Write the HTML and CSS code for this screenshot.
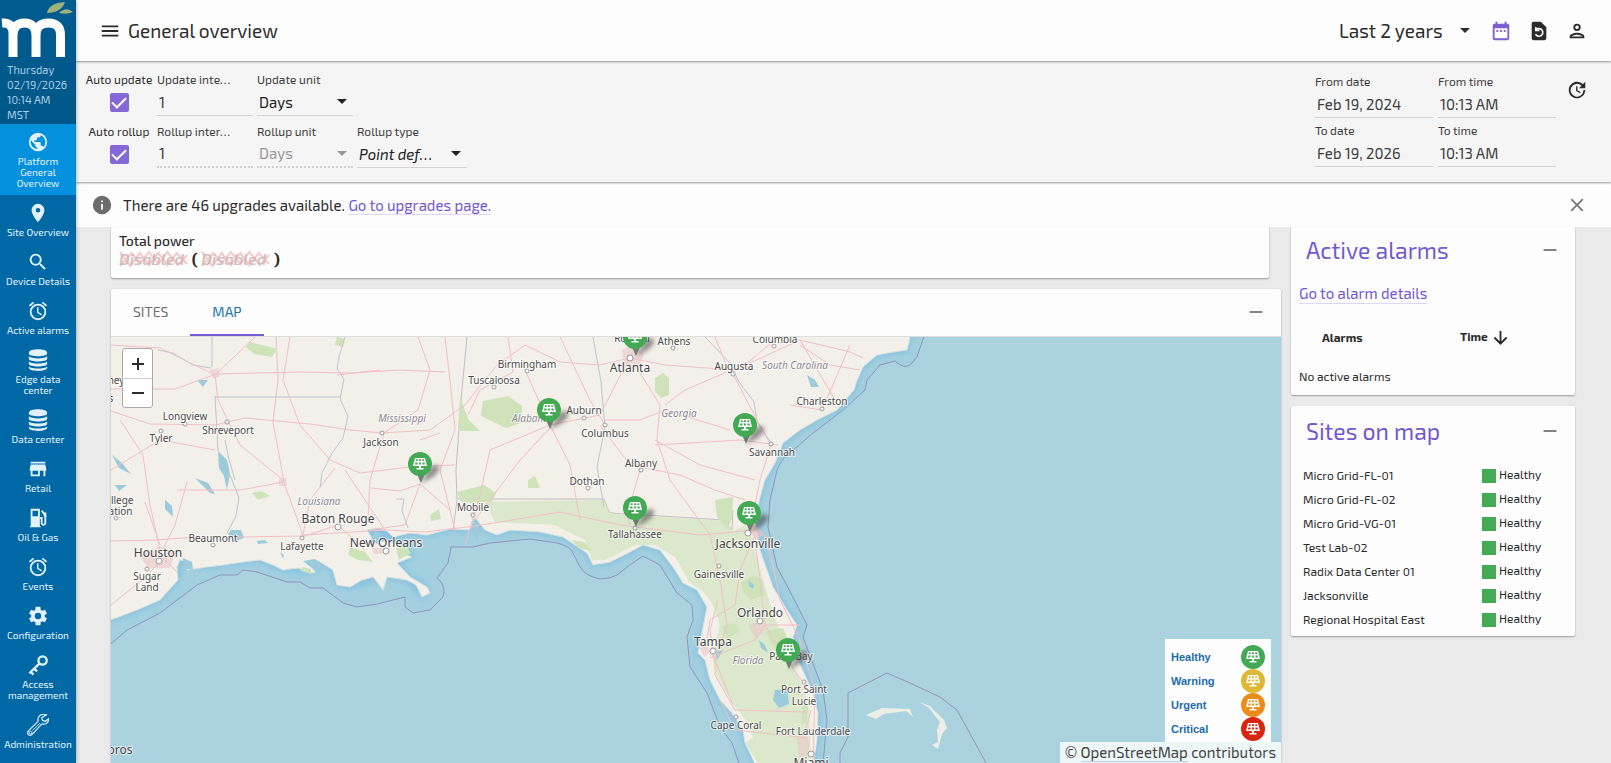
FILE: index.html
```html
<!DOCTYPE html>
<html lang="en">
<head>
<meta charset="utf-8">
<meta name="viewport" content="width=device-width, initial-scale=1">
<title>General overview</title>
<link rel="stylesheet" href="styles.css">
</head>
<body>
<svg class="defs" aria-hidden="true">
  <symbol id="alarm" viewBox="0 0 24 24"><path d="M12 4a9 9 0 1 0 0 18 9 9 0 0 0 0-18zm0 16a7 7 0 1 1 0-14 7 7 0 0 1 0 14zm.5-12H11v6l4.700 2.900.8-1.300-4-2.400zM22 5.700l-4.600-3.900-1.300 1.500 4.600 3.900zM7.900 3.300 6.600 1.800 2 5.700l1.300 1.500z"/></symbol>
  <symbol id="db" viewBox="0 0 24 24"><path d="M2 4c0-5 20-5 20 0v1c0 4-20 4-20 0zM2 8c3 3 17 3 20 0v2.500c0 4-20 4-20 0zM2 13.500c3 3 17 3 20 0V16c0 4-20 4-20 0zM2 19c3 3 17 3 20 0v1.500c0 4.500-20 4.500-20 0z"/></symbol>
  <symbol id="down" viewBox="0 0 10 5"><path d="M0 0h10L5 5z"/></symbol>
  <symbol id="scribble" viewBox="0 0 67 18" preserveAspectRatio="none"><path fill="none" stroke="currentColor" stroke-width="2" d="M1 2 11 16 20 3 29 15 38 3 47 15 56 3 66 14M1 16 12 3 20 13 29 2 38 14 47 2 57 15 66 5"/></symbol>
  <symbol id="panel" viewBox="0 0 14 12"><path fill-rule="evenodd" d="M2 0h10l2 8H8v2h2.500v1.500h-7V10H6V8H0zM3 1.300l-.3 1.700h2V1.300zm3 0V3h2V1.300zm3.300 0V3h2L11 1.300zM2.300 4.500 2 6.500h2.600v-2zm3.700 0v2h2v-2zm3.400 0v2H12l-.4-2z"/></symbol>
  <symbol id="pin" viewBox="0 0 36 34" overflow="visible"><path d="M13 31 22 15Q32 10 31 18 28 25 13 31z" fill="#333" opacity=".5" filter="url(#soft)"/><path d="M9 22l4 9 4-9z" fill="#6c8070"/><circle cx="12" cy="12" r="12" fill="#43a954"/><use href="#panel" x="5" y="6" width="14" height="12" fill="#fff"/></symbol>
  <filter id="soft" x="-30%" y="-30%" width="160%" height="160%"><feGaussianBlur stdDeviation="2"/></filter>
  <filter id="haze"><feGaussianBlur stdDeviation="3"/></filter>
</svg>

<div class="app">
  <nav class="sidebar" aria-label="Main">
    <div class="brand">
      <svg class="logo" viewBox="0 0 76 60" role="img" aria-label="Logo">
        <path fill="#9fb27c" d="M47 13Q49 3 65 2 61 13 47 13zM59 13Q66 6 73 12 67 15 59 13z"/>
        <path fill="none" stroke="#fff" stroke-width="9" d="M2 23Q13 22 13 34V57M13 36Q13 23 24.500 23T36 36V57M36 36Q36 23 48.500 23T60.500 36V57"/>
      </svg>
      <p class="clock">Thursday<br>02/19/2026<br>10:14 AM<br>MST</p>
    </div>
    <a class="item active" href="#"><svg viewBox="0 0 24 24"><path d="M12 2a10 10 0 1 0 0 20 10 10 0 0 0 0-20zm-1 17.900A8 8 0 0 1 4.200 10.200L9 15v1c0 1.100.9 2 2 2zm6.900-2.500A2 2 0 0 0 16 16h-1v-3c0-.6-.4-1-1-1H8v-2h2c.6 0 1-.4 1-1V7h2c1.100 0 2-.9 2-2v-.4a8 8 0 0 1 2.900 12.800z"/></svg>Platform General Overview</a>
    <a class="item" href="#"><svg viewBox="0 0 24 24"><path d="M12 2a7 7 0 0 0-7 7c0 5.200 7 13 7 13s7-7.800 7-13a7 7 0 0 0-7-7zm0 9.500a2.500 2.500 0 1 1 0-5 2.500 2.500 0 0 1 0 5z"/></svg>Site Overview</a>
    <a class="item" href="#"><svg viewBox="0 0 24 24"><path d="M15.500 14h-.8l-.3-.3a6.500 6.500 0 1 0-.7.7l.3.3v.8l5 5 1.500-1.500zm-6 0a4.500 4.500 0 1 1 0-9 4.500 4.500 0 0 1 0 9z"/></svg>Device Details</a>
    <a class="item" href="#"><svg><use href="#alarm"/></svg>Active alarms</a>
    <a class="item" href="#"><svg><use href="#db"/></svg>Edge data center</a>
    <a class="item" href="#"><svg><use href="#db"/></svg>Data center</a>
    <a class="item" href="#"><svg viewBox="0 0 24 24"><path d="M20 4H4v2h16zm1 10v-2l-1-5H4l-1 5v2h1v6h10v-6h4v6h2v-6zm-9 4H6v-4h6z"/></svg>Retail</a>
    <a class="item" href="#"><svg viewBox="0 0 24 24"><path fill-rule="evenodd" d="M4 2h10v19h1v1H3v-1h1zm2 2v6h6V4z"/><path fill="none" stroke="currentColor" stroke-width="2" d="M14 12h2v6q2 3 4 0V9l-4-5"/><path d="M17 6h4v5h-2z"/></svg>Oil &amp; Gas</a>
    <a class="item" href="#"><svg><use href="#alarm"/></svg>Events</a>
    <a class="item" href="#"><svg viewBox="0 0 24 24"><path d="M19.400 13a7.500 7.500 0 0 0 0-2l2.400-1.800-2.300-4-2.800 1.200a7 7 0 0 0-1.700-1L14.600 2H9.400L9 5.400a7 7 0 0 0-1.700 1L4.500 5.200l-2.300 4L4.600 11a7.500 7.500 0 0 0 0 2l-2.400 1.800 2.300 4 2.800-1.200a7 7 0 0 0 1.700 1l.4 3.400h5.200l.4-3.400a7 7 0 0 0 1.700-1l2.800 1.200 2.300-4zM12 15.500a3.500 3.500 0 1 1 0-7 3.500 3.500 0 0 1 0 7z"/></svg>Configuration</a>
    <a class="item" href="#"><svg viewBox="0 0 24 24" fill="none"><g fill="none" stroke="currentColor" stroke-width="2.500"><circle cx="17" cy="7" r="4.500"/><path d="M13.500 10.500 2.500 21M4 19.500l3 3M8 16l3 3"/></g></svg>Access management</a>
    <a class="item" href="#"><svg viewBox="0 0 24 24"><path fill="none" stroke="currentColor" stroke-width="1.300" d="M21 1q-7-2-9 4v3L1 19q-1 3 1 4t4-1L16 11q7 1 8-6l-4 3-3-1-1-3z"/><path fill="none" stroke="currentColor" d="M14 10 6 18"/><circle cx="4" cy="20.500" r="1.500" fill="none" stroke="currentColor"/></svg>Administration</a>
  </nav>

  <div class="page">
    <header class="header">
      <button class="icon" aria-label="Menu"><svg viewBox="0 0 24 24"><path d="M3 6h18v2H3zm0 5h18v2H3zm0 5h18v2H3z"/></svg></button>
      <h1>General overview</h1>
      <div class="range"><select aria-label="Time range"><option>Last 2 years</option></select><svg class="arrow"><use href="#down"/></svg></div>
      <div class="actions">
        <button class="icon violet" aria-label="Date range"><svg viewBox="0 0 24 24"><path d="M7 11h2v2H7zm4 0h2v2h-2zm4 0h2v2h-2zM19 4h-1V2h-2v2H8V2H6v2H5a2 2 0 0 0-2 2v14c0 1.100.9 2 2 2h14a2 2 0 0 0 2-2V6a2 2 0 0 0-2-2zm0 16H5V9h14z"/></svg></button>
        <button class="icon" aria-label="Restore"><svg viewBox="0 0 24 24"><path d="M14 2H6a2 2 0 0 0-2 2v16c0 1.100.9 2 2 2h12a2 2 0 0 0 2-2V8z"/><path fill="none" stroke="#fdfdfd" stroke-width="1.800" d="M9 10.500a4.200 4.200 0 1 1-.8 5M8.500 7.500v4h4"/></svg></button>
        <button class="icon" aria-label="User"><svg viewBox="0 0 24 24"><path d="M12 6a2 2 0 1 1 0 4 2 2 0 0 1 0-4m0 10c2.700 0 5.800 1.300 6 2H6c.2-.7 3.300-2 6-2m0-12a4 4 0 1 0 0 8 4 4 0 0 0 0-8zm0 10c-2.700 0-8 1.300-8 4v2h16v-2c0-2.700-5.300-4-8-4z"/></svg></button>
      </div>
    </header>

    <section class="toolbar" aria-label="Date settings">
      <div class="update">
        <label class="check">Auto update<input type="checkbox" checked></label>
        <label class="field">Update inte…<input value="1"></label>
        <label class="field">Update unit<span class="pick"><select><option>Days</option></select><svg class="arrow"><use href="#down"/></svg></span></label>
        <span></span>
        <label class="check">Auto rollup<input type="checkbox" checked></label>
        <label class="field dotted">Rollup inter…<input value="1"></label>
        <label class="field dotted off">Rollup unit<span class="pick"><select disabled><option>Days</option></select><svg class="arrow"><use href="#down"/></svg></span></label>
        <label class="field">Rollup type<span class="pick"><select class="italic"><option>Point def…</option></select><svg class="arrow"><use href="#down"/></svg></span></label>
      </div>
      <div class="dates">
        <label class="field">From date<input value="Feb 19, 2024"></label>
        <label class="field">From time<input value="10:13 AM"></label>
        <label class="field">To date<input value="Feb 19, 2026"></label>
        <label class="field">To time<input value="10:13 AM"></label>
      </div>
      <button class="icon reload" aria-label="Refresh"><svg viewBox="0 0 24 24"><path d="M21 10.100h-6.800l2.700-2.800a7 7 0 1 0 2.100 4.800h2A9 9 0 1 1 18.400 5.700L21 3zM12.500 8v4.300l3.500 2-.7 1.200L11 13V8z"/></svg></button>
    </section>

    <div class="notice">
      <svg class="info" viewBox="0 0 24 24"><path d="M12 2a10 10 0 1 0 0 20 10 10 0 0 0 0-20zm1 15h-2v-6h2zm0-8h-2V7h2z"/></svg>
      <p>There are 46 upgrades available. <a href="#">Go to upgrades page.</a></p>
      <button class="icon grey" aria-label="Dismiss"><svg viewBox="0 0 24 24"><path d="M19 6.400 17.600 5 12 10.600 6.400 5 5 6.400l5.600 5.600L5 17.600 6.400 19l5.600-5.600 5.600 5.600 1.400-1.400-5.600-5.600z"/></svg></button>
    </div>

    <main class="content">
      <div class="left">
        <section class="card power">
          <h2>Total power</h2>
          <p><span class="disabled">Disabled<svg><use href="#scribble"/></svg></span> <b>(</b> <span class="disabled">Disabled<svg><use href="#scribble"/></svg></span> <b>)</b></p>
        </section>
        <section class="card map-card">
          <div class="tabs" role="tablist">
            <button role="tab">SITES</button>
            <button role="tab" class="selected" aria-selected="true">MAP</button>
            <button class="icon grey" aria-label="Collapse"><svg viewBox="0 0 24 24"><path d="M5 11h14v2H5z"/></svg></button>
          </div>
          <div class="map">
            <svg class="chart" viewBox="111 337 1170 426" preserveAspectRatio="xMinYMin slice" role="img" aria-label="Site map">
              <rect x="111" y="337" width="1170" height="426" fill="#aad3df"/>
              <path class="shelf" d="M100 650 112 643 127 630 160 613 197 585 220 575 237 575 243 570 257 572 287 582 300 582 310 588 323 588 343 603 357 607 377 604 405 597 405 607 413 613 430 610 443 597Q447 586 437 578L448 563 451 547 473 547 490 543 530 539 557 543Q570 546 573 553L580 567Q585 576 600 579 610 579 617 575L630 565 643 556 660 565 677 593 692 605 693 620 687 637 690 667 707 693 720 727 732 743 743 775H822L827 720 823 690 803 637 807 625 793 597 777 567 768 527 770 500 777 470Q782 456 797 447L813 433 843 410 865 390 867 380 880 365 895 361Q905 370 911 364L917 357 926 330H100z"/>
              <path class="shallows" filter="url(#haze)" d="M100 330H911L909 342 907 350 893 352 877 355 863 367 856 383 854 390 837 410 817 420 800 430 783 443 775 463 765 480 760 497 755 520 760 550 773 587 787 610 797 625 793 637 798 660 813 693 818 713 817 740 812 770H758L745 743 743 730 732 713 720 700 710 680 705 660 698 653 703 627 707 607 697 590 683 583 673 567 660 550 643 545 630 552 610 562 593 565 587 553 563 537 540 532 510 530 497 535 485 530 477 520 470 530 450 529 427 535 410 533 393 537 403 547 412 557 397 563 410 577 427 587 422 597 407 580 387 577 350 587 337 585 333 570 317 560 310 573 283 570 260 560 243 562 223 565 207 567 180 560 178 580 160 600 137 610 100 624z"/>
              <path class="land" d="M100 330H911L909 342 907 350 893 352 877 355 863 367 856 383 854 390 837 410 817 420 800 430 783 443 775 463 765 480 760 497 755 520 760 550 773 587 787 610 797 625 793 637 798 660 813 693 818 713 817 740 812 770H758L745 743 743 730 732 713 720 700 710 680 705 660 698 653 703 627 707 607 697 590 683 583 673 567 660 550 643 545 630 552 610 562 593 565 587 553 563 537 540 532 510 530 497 535 485 530 477 520 474 518 470 530 450 529 427 535 410 533 393 537 387 531 377 528 367 530 373 540 393 543 403 547 400 552 412 557 397 563 410 577 427 587 430 593 422 597 416 585 407 580 387 577 383 590 378 583 373 577 362 580 350 587 337 585 333 570 317 560 316 572 310 573 298 568 283 570 273 565 260 560 243 562 223 565 207 567 187 570 191 562 180 560 177 567 178 580 160 600 137 610 100 624z"/>
              <path class="state" d="M451 545 457 500 456 470 461 400 467 337M457 499H604L609 512Q614 514 630 514L724 520 732 530 733 510"/>
              <g class="green">
                <path d="M250 342l12 3 15 4-5 8-18-3-8-7zM337 337l8 2-2 8-8-2zM460 396l8 23 12 12H458zM483 401l25-5 14 10-1 17-15 5-25-12zM457 492l27-7 12 8-4 9-22 1-10-2zM528 480l7-4 5 12-12 0zM655 378l8-5 6 5 0 17-8 3-6-7zM715 500l18-3-1 22-5 10-10-12zM430 515l9-6 2 10-10 2zM252 493l10-2 8 5-12 4z"/>
                <path opacity=".65" d="M485 502 604 500 612 514 725 521 733 531 745 525 751 535 756 555 766 590 777 625 785 640 793 665 804 690 809 710 811 763H758L745 743 753 738 747 722 731 701 716 675 712 655 720 625 713 605 704 592 690 583 675 557 655 545 635 545 605 560 592 560 585 540 555 525 495 522z"/>
                <path d="M741 582l13-7 8 5 3 15-14 5-8-8zM722 626l12-3 6 8-13 8zM765 631l18-3 6 14-14 8zM803 705l5 0-1 17-6 3zM350 547l15 5 8 10-15-2-10-5zM396 548l10-2 5 7-12 7zM302 567l9 2 0 5-10-3zM572 540l12 2 8 9-14-3z"/>
              </g>
              <g class="lake">
                <path d="M218 451l9 9 3 14-3 16-3-14-5-8zM195 478l15 15 5 1-7-11zM165 500l7 6 1 11-8-8zM228 534l3-4 10 0 3 8-10 4zM280 552l4 3-1 4zM303 561l12-2 10 9-8 6-4-5zM375 531l7 3-4 10-8-3zM470 530l5-12 5 14-3 8zM775 690l12-1 2 15-10 4-6-8zM807 375l8 5 4 7-8 0zM748 580l6 5-1 4-4-3zM715 652l8-2-6 10zM759 640l6 5 3 8-7-5zM183 558l9 4 1 8-9-2zM257 541l8-1 3 3-10 1zM112 455l10 8 9 11-12-6zM115 485l12 0-8 6zM197 380l11 0-5 7z"/>
              </g>
              <path class="river" d="M345 337l-6 20-2 12 7 10-4 20 8 17-5 22-11 15-10 20-2 15M218 451l-3-55M230 475l9 23-3 18-9 17M225 440l4 20 6 20M158 350l15 3 20 12 18 3M396 499l8 0-2 12 6 17M705 337l24 25 10 20 15 20 3 20 15 22M593 337l8 45 4 45-8 40 7 40M212 337v30M215 397H340"/>
              <g class="road">
                <path d="M111 411 150 424 215 425 245 418 310 424 350 430 382 433 430 430 465 405 497 365 525 345 560 362 600 365 630 358 665 365 735 370 800 340 850 352 863 358"/>
                <path d="M111 345 160 348 215 375 218 400 228 421 240 445 283 480 303 535 385 530 425 532 475 526 500 522 560 512 620 525 700 535 755 530 767 537 780 600 800 640 815 690 813 763"/>
                <path d="M111 389 175 389 216 374 255 337M215 374 300 372 350 373 400 370 445 372M276 337 278 380 273 422 280 460 284 482 240 490 177 490M111 541 155 540 195 537 240 537 305 536 338 525 365 550"/>
                <path d="M120 420 143 455 150 505 160 550M162 560l-20 20-31 25M160 545l-15-43M160 555l18 18M187 482 175 525 160 555M384 433 418 410 430 370 418 337M384 433 370 480 368 520M420 484 405 525 370 530M420 484 400 491 371 488M420 484 450 510M420 440 440 433"/>
                <path d="M550 428 520 460 490 500 475 520M525 370 550 425 600 415 640 337M605 420 640 420 665 410 730 430M635 365 660 405 657 440 670 480 710 535 720 580 727 625 715 660 715 675 735 710 807 712M665 405 685 390 720 375 745 365 778 337M733 374 765 435 771 445 760 480 750 530"/>
                <path d="M755 535 740 570 735 605 710 620 707 640M755 540 760 580 765 625 755 640 710 658M765 625 800 625M765 625 780 650 805 685M720 700 735 730 808 738M718 600 710 630 713 655 733 705M803 740l8-30"/>
                <path d="M445 337 450 380 455 430 440 470 455 530M508 337 513 372 480 390 468 415M465 545 480 495 490 450 550 425 570 465 580 520M640 470 627 515 630 525M600 425 630 465 680 475 715 490 745 500M655 440 700 465 755 480M778 445 740 440 655 445M560 337 590 400 605 425"/>
                <path d="M290 337 283 380 300 425 330 460 360 473 410 467 455 465M337 375 380 370M335 468 310 500 303 535M345 470 365 500 385 530M111 470 160 440 215 450M800 340 835 400M850 345 822 410 790 405M730 374 715 337M800 345 830 365 860 370"/>
              </g>
              <g class="urban"><path d="M140 556l20-10 15 8-5 14-22 0zM622 350l12-6 10 10-5 12-15 0zM748 528l8-3 8 8-8 9zM748 625l12-5 6 9-10 10zM797 737l8-5 5 12-5 20-6-7zM700 648l7-4 3 8-6 5zM210 370l8-2 2 8-7 3zM279 478l7 0 1 8-8 0zM372 548l12 0 1 5-11 1z"/></g>
              <path class="border" d="M840 770V753L848 737V693L887 673 910 683 940 697 957 710 990 770"/>
              <path class="cay" d="M866 715l16-7 28 1 3 8-7-6-22 3-8 5zM919 702l11 4 14 14 3 8-5 6-4 15-6-4 6-3-1-12 3-8-11-14z"/>
              <g class="dots">
                <circle cx="185" cy="424" r="2"/><circle cx="161" cy="431" r="2"/><circle cx="227" cy="422" r="2"/><circle cx="382" cy="433" r="2"/><circle cx="494" cy="387" r="2"/><circle cx="527" cy="371" r="2"/><circle cx="630" cy="358" r="3"/><circle cx="673" cy="348" r="2"/><circle cx="774" cy="346" r="2"/><circle cx="733" cy="374" r="2"/><circle cx="822" cy="409" r="2"/><circle cx="584" cy="418" r="2"/><circle cx="605" cy="425" r="2"/><circle cx="771" cy="444" r="2"/><circle cx="641" cy="470" r="2"/><circle cx="588" cy="488" r="2"/><circle cx="338" cy="527" r="3"/><circle cx="302" cy="538" r="2"/><circle cx="386" cy="551" r="3"/><circle cx="213" cy="545" r="2"/><circle cx="159" cy="561" r="3"/><circle cx="147" cy="569" r="2"/><circle cx="473" cy="515" r="2"/><circle cx="635" cy="528" r="2"/><circle cx="748" cy="533" r="3"/><circle cx="719" cy="566" r="2"/><circle cx="760" cy="621" r="3"/><circle cx="713" cy="651" r="3"/><circle cx="804" cy="682" r="2"/><circle cx="736" cy="717" r="2"/><circle cx="811" cy="754" r="3"/><circle cx="116" cy="518" r="2"/>
              </g>
              <g class="town">
                <text x="185" y="420">Longview</text><text x="161" y="442">Tyler</text><text x="228" y="434">Shreveport</text><text x="381" y="446">Jackson</text><text x="494" y="384">Tuscaloosa</text><text x="527" y="368">Birmingham</text><text x="632" y="342">Roswell</text><text x="674" y="345">Athens</text><text x="775" y="343">Columbia</text><text x="734" y="370">Augusta</text><text x="822" y="405">Charleston</text><text x="584" y="414">Auburn</text><text x="605" y="437">Columbus</text><text x="772" y="456">Savannah</text><text x="641" y="467">Albany</text><text x="587" y="485">Dothan</text><text x="473" y="511">Mobile</text><text x="635" y="538">Tallahassee</text><text x="719" y="578">Gainesville</text><text x="302" y="550">Lafayette</text><text x="213" y="542">Beaumont</text><text x="147" y="580">Sugar</text><text x="147" y="591">Land</text><text x="791" y="660">Palm Bay</text><text x="804" y="693">Port Saint</text><text x="804" y="705">Lucie</text><text x="736" y="729">Cape Coral</text><text x="813" y="735">Fort Lauderdale</text><text x="116" y="384">ney</text><text x="116" y="504">College</text><text x="116" y="515">Station</text><text x="111" y="402">s</text>
              </g>
              <g class="city">
                <text x="630" y="372">Atlanta</text><text x="338" y="523">Baton Rouge</text><text x="386" y="547">New Orleans</text><text x="158" y="557">Houston</text><text x="748" y="548">Jacksonville</text><text x="760" y="617">Orlando</text><text x="713" y="646">Tampa</text><text x="811" y="767">Miami</text><text x="100" y="754">Matamoros</text>
              </g>
              <g class="region">
                <text x="402" y="422">Mississippi</text><text x="319" y="505">Louisiana</text><text x="532" y="422">Alabama</text><text x="679" y="417">Georgia</text><text x="795" y="369">South Carolina</text><text x="748" y="664">Florida</text>
              </g>
              <use href="#pin" x="623" y="325" width="36" height="34"/>
              <use href="#pin" x="537" y="398" width="36" height="34"/>
              <use href="#pin" x="733" y="413" width="36" height="34"/>
              <use href="#pin" x="408" y="452" width="36" height="34"/>
              <use href="#pin" x="623" y="496" width="36" height="34"/>
              <use href="#pin" x="737" y="501" width="36" height="34"/>
              <use href="#pin" x="776" y="638" width="36" height="34"/>
            </svg>
            <div class="zoom"><button aria-label="Zoom in"><svg viewBox="0 0 12 12"><path d="M0 5h12v2H0zM5 0h2v12H5z"/></svg></button><button aria-label="Zoom out"><svg viewBox="0 0 12 12"><path d="M0 5h12v2H0z"/></svg></button></div>
            <div class="overlay">
              <ul class="legend">
                <li>Healthy<i class="healthy"><svg><use href="#panel"/></svg></i></li>
                <li>Warning<i class="warning"><svg><use href="#panel"/></svg></i></li>
                <li>Urgent<i class="urgent"><svg><use href="#panel"/></svg></i></li>
                <li>Critical<i class="critical"><svg><use href="#panel"/></svg></i></li>
              </ul>
              <p class="credit">© <a href="#">OpenStreetMap</a> contributors</p>
            </div>
          </div>
        </section>
      </div>
      <aside class="right">
        <section class="card alarms">
          <header><h2>Active alarms</h2><button class="icon grey" aria-label="Collapse"><svg viewBox="0 0 24 24"><path d="M5 11h14v2H5z"/></svg></button></header>
          <a href="#">Go to alarm details</a>
          <table>
            <thead><tr><th>Alarms</th><th>Time<svg viewBox="0 0 16 16"><path fill="none" stroke="currentColor" stroke-width="2" d="M8 1v13M1.500 8 8 14.500 14.500 8"/></svg></th></tr></thead>
            <tbody><tr><td colspan="2">No active alarms</td></tr></tbody>
          </table>
        </section>
        <section class="card sites">
          <header><h2>Sites on map</h2><button class="icon grey" aria-label="Collapse"><svg viewBox="0 0 24 24"><path d="M5 11h14v2H5z"/></svg></button></header>
          <table><tbody>
            <tr><td>Micro Grid-FL-01</td><td><i></i>Healthy</td></tr>
            <tr><td>Micro Grid-FL-02</td><td><i></i>Healthy</td></tr>
            <tr><td>Micro Grid-VG-01</td><td><i></i>Healthy</td></tr>
            <tr><td>Test Lab-02</td><td><i></i>Healthy</td></tr>
            <tr><td>Radix Data Center 01</td><td><i></i>Healthy</td></tr>
            <tr><td>Jacksonville</td><td><i></i>Healthy</td></tr>
            <tr><td>Regional Hospital East</td><td><i></i>Healthy</td></tr>
          </tbody></table>
        </section>
      </aside>
    </main>
  </div>
</div>
</body>
</html>
```
FILE: styles.css
```css
* { box-sizing: border-box; margin: 0; padding: 0; }
body { font-family: "Exo 2", Roboto, "Noto Sans", sans-serif; font-size: 15px; color: #2b2b2b; background: #eaeaea; overflow: hidden; }
button, input, select { font: inherit; color: inherit; background: none; border: 0; outline: 0; appearance: none; }
select { opacity: 1; }
svg { fill: currentColor; }
a { color: #7358cf; text-decoration: none; border-bottom: 1px solid #ddd7f3; }
.defs { position: absolute; width: 0; height: 0; }
.app { display: flex; height: 100vh; }

.sidebar { width: 76px; flex: none; background: #0069a5; color: #e2f2fc; box-shadow: 0 0 4px rgba(0,0,0,.35); z-index: 3; overflow: hidden; }
.brand { height: 124px; background: linear-gradient(#005b8e, #00588a); }
.logo { display: block; width: 76px; height: 60px; }
.clock { padding: 2px 7px; font-size: 11px; line-height: 15px; color: #a9cde4; }
.item { display: flex; flex-direction: column; align-items: center; gap: 3px; padding: 7px 6px 6px; border: 0; color: inherit; font-size: 10px; line-height: 11px; text-align: center; }
.item svg { width: 22px; height: 22px; }
.item.active { background: #0390dc; padding-inline: 14px; }

.page { flex: 1; min-width: 0; display: flex; flex-direction: column; }
.icon { display: flex; flex: none; }
.icon svg { width: 22px; height: 22px; }
.violet { color: #7b5fd0; }
.grey { color: #777; }

.header { display: flex; align-items: center; height: 61px; flex: none; padding: 0 23px; background: #fdfdfd; box-shadow: 0 1px 2px rgba(0,0,0,.4); z-index: 2; }
.header h1 { flex: 1; padding-left: 7px; font-size: 19px; font-weight: 400; }
.range { display: flex; align-items: center; gap: 16px; font-size: 19px; padding-right: 20px; }
.actions { display: flex; gap: 16px; }
.arrow { width: 10px; height: 5px; flex: none; }

.toolbar { display: flex; align-items: flex-start; flex: none; height: 121px; padding: 9px 23px 10px 6px; background: #f5f5f5; box-shadow: 0 1px 2px rgba(0,0,0,.4); z-index: 1; }
.update { display: grid; grid-template-columns: 71px 96px 96px 110px; column-gap: 4px; row-gap: 6px; flex: 1; }
.check { display: flex; flex-direction: column; align-items: center; gap: 5px; padding-left: 3px; font-size: 12px; line-height: 18px; white-space: nowrap; }
.check input { width: 19px; height: 19px; border-radius: 2px; background: #8468d8; display: grid; place-items: center; }
.check input::after { content: ""; width: 12px; height: 6px; border: solid #fff; border-width: 0 0 2px 2px; transform: translateY(-2px) rotate(-45deg); }
.field { display: flex; flex-direction: column; height: 46px; font-size: 12px; line-height: 18px; border-bottom: 1px solid #d4d4d4; color: #3c3c3c; }
.field input { width: 100%; height: 28px; padding: 0 2px; font-size: 15px; }
.pick { display: flex; align-items: center; height: 28px; padding: 0 6px 0 2px; color: #222; }
.pick select { flex: 1; min-width: 0; font-size: 15px; }
.dotted { border-bottom: 2px dotted #d0d0d0; }
.off .pick { color: #999; }
.italic { font-style: italic; }
.dates { display: grid; grid-template-columns: 118px 118px; column-gap: 5px; row-gap: 3px; padding-top: 2px; }
.reload { margin: 9px 0 0 10px; }

.notice { display: flex; align-items: center; gap: 10px; flex: none; height: 45px; padding: 0 23px 0 15px; background: #fdfdfd; }
.notice p { flex: 1; }
.info { width: 22px; height: 22px; color: #6c6c6c; }

.content { flex: 1; min-height: 0; display: flex; gap: 10px; padding: 0 36px 0 35px; }
.left { flex: 1; min-width: 0; display: flex; flex-direction: column; gap: 11px; }
.right { width: 284px; display: flex; flex-direction: column; gap: 11px; }
.card { background: #fdfdfd; border-radius: 2px; box-shadow: 0 1px 2px rgba(0,0,0,.35); }
.power { height: 51px; padding: 5px 8px; margin-right: 12px; }
.power h2 { font-size: 14px; line-height: 18px; font-weight: 500; }
.power p { font-size: 16px; line-height: 18px; }
.disabled { position: relative; display: inline-block; padding-right: 4px; color: #c9c3c3; font-style: italic; font-weight: 600; }
.disabled svg { position: absolute; inset: 0; width: 100%; height: 100%; color: rgba(240,168,168,.6); }
.map-card { flex: 1; display: flex; flex-direction: column; min-height: 0; }
.tabs { display: flex; align-items: stretch; height: 48px; flex: none; color: #6f6f6f; border-bottom: 1px solid #ddd; }
.tabs button { font-size: 14px; padding: 0 22px; border-bottom: 2px solid transparent; }
.tabs .selected { color: #2173a9; border-color: #735bd3; }
.tabs .icon { margin-left: auto; padding: 0 14px; align-items: center; }
.map { position: relative; flex: 1; min-height: 0; overflow: hidden; background: #aad3df; }
.chart { display: block; width: 100%; height: 100%; font-family: "Noto Sans", sans-serif; }
.shelf { fill: #a3d0df; stroke: #8e95bb; stroke-width: 1; }
.shallows { fill: #8bc2e0; stroke: #8bc2e0; stroke-width: 5; }
.land { fill: #f3efe9; stroke: #d5e4df; }
.state { fill: none; stroke: #c4bfc5; }
.green { fill: #cfe3bb; }
.lake { fill: #9ccbdc; }
.river { fill: none; stroke: #bdc7cf; stroke-width: 1; }
.road { fill: none; stroke: #f3bfc5; stroke-width: 1; }
.urban { fill: #ecc6ca; opacity: .6; }
.border { fill: none; stroke: #8e95bb; }
.cay { fill: #eeeee6; }
.dots { fill: #fff; stroke: #999; stroke-width: 1; }
.town, .city, .region { text-anchor: middle; paint-order: stroke; stroke: rgba(255,255,255,.7); stroke-width: 2px; stroke-linejoin: round; }
.town { font-size: 10px; fill: #4a4a4a; }
.city { font-size: 12px; fill: #444; }
.region { font-size: 10px; font-style: italic; fill: #8b8791; }
.zoom { position: absolute; left: 11px; top: 11px; display: flex; flex-direction: column; border: 1px solid #aaa; border-radius: 3px; background: #fff; }
.zoom button { display: grid; place-items: center; width: 29px; height: 29px; }
.zoom svg { width: 12px; height: 12px; }
.zoom button + button { border-top: 1px solid #ccc; }
.overlay { position: absolute; right: 0; bottom: 0; display: flex; flex-direction: column; align-items: flex-end; }
.legend { width: 106px; margin-right: 10px; padding: 6px 6px 1px; background: #fdfdfd; list-style: none; font: bold 11px "Liberation Sans", sans-serif; color: #1b6cab; }
.legend li { display: flex; align-items: center; justify-content: space-between; height: 24px; }
.legend i { display: grid; place-items: center; width: 24px; height: 24px; border-radius: 50%; color: #fff; }
.legend svg { width: 14px; height: 12px; }
.healthy { background: #43a954; }
.warning { background: #dfb936; }
.urgent { background: #ec8c1a; }
.critical { background: #d9250d; }
.credit { padding: 0 5px; line-height: 21px; background: rgba(250,253,253,.85); color: #444; }
.credit a { color: inherit; border-color: #b9d5e4; }

.right header { display: flex; justify-content: space-between; align-items: center; padding: 0 6px 0 7px; }
.right h2 { font-size: 23px; font-weight: 400; color: #7358cf; line-height: 30px; }
.right table { width: 100%; border-collapse: collapse; font-size: 12px; }
.alarms { padding: 8px 8px 4px; }
.alarms > a { display: inline-block; margin-top: 18px; line-height: 20px; }
.alarms table { margin-top: 9px; }
.alarms th { height: 48px; text-align: left; padding-left: 23px; }
.alarms th svg { width: 15px; height: 15px; margin-left: 5px; vertical-align: middle; }
.alarms th:last-child { width: 130px; padding-left: 23px; }
.alarms td { height: 30px; }
.sites { padding: 10px 8px 5px; }
.sites table { margin-top: 17px; }
.sites td { height: 24px; padding-left: 4px; }
.sites td:last-child { width: 89px; }
.sites i { display: inline-block; width: 14px; height: 14px; margin-right: 3px; background: #43a954; vertical-align: middle; }
```
